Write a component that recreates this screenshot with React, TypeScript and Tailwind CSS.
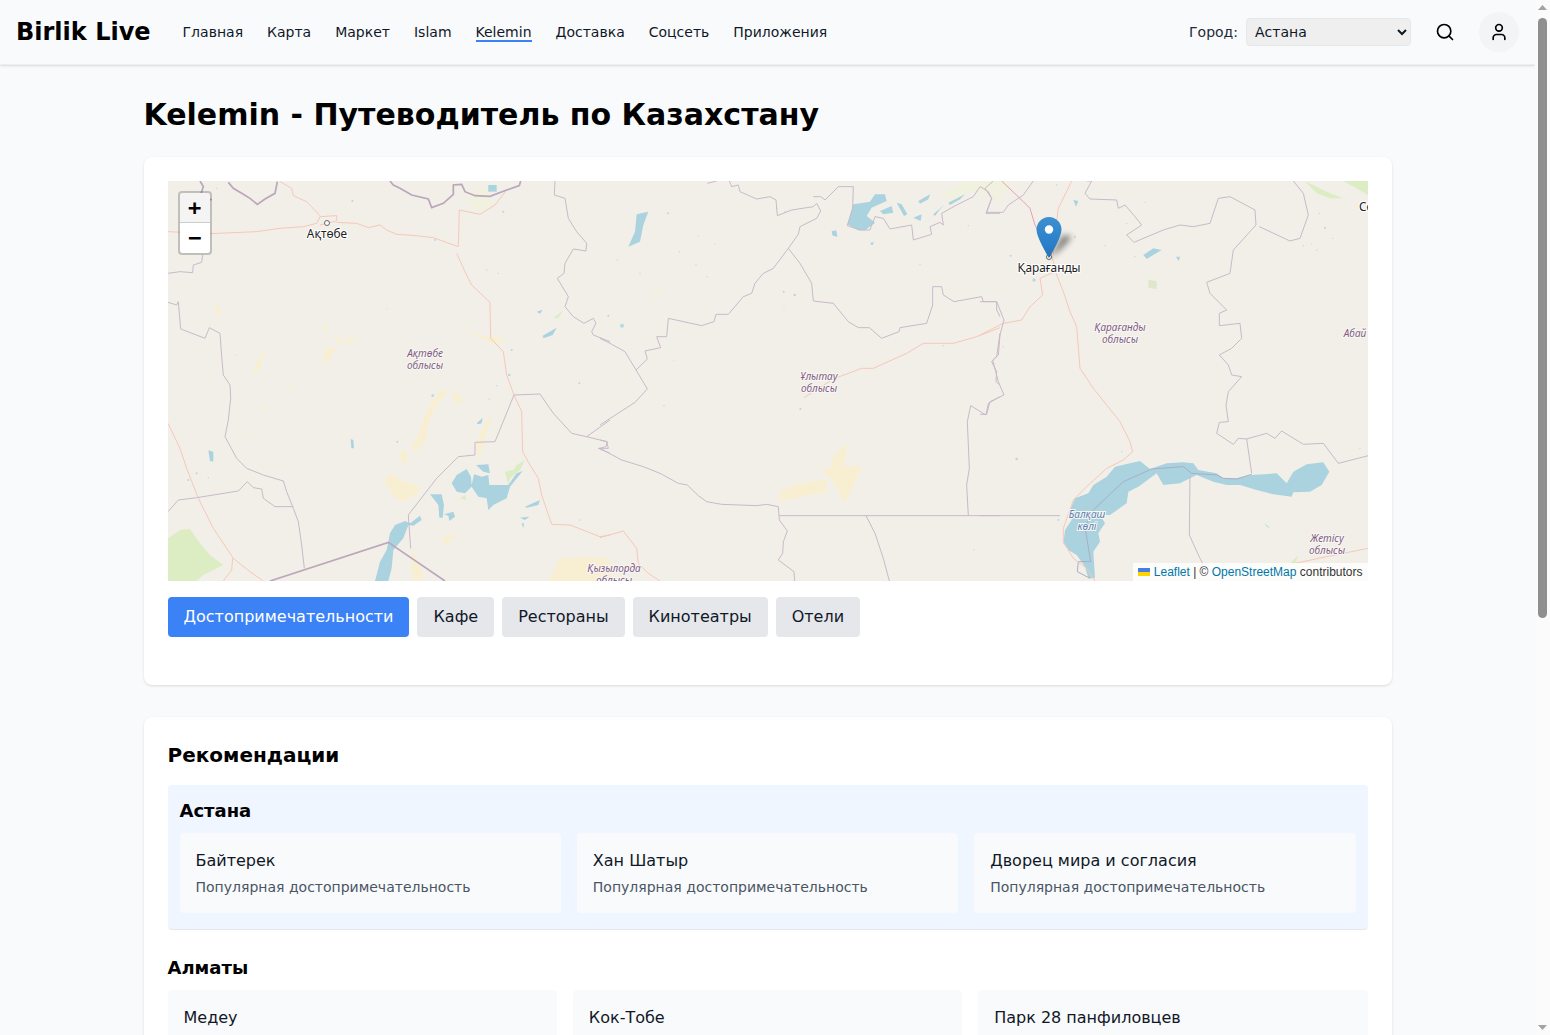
import { Search, User } from "lucide-react";

const BORDER = "#c9b9c9";
const ROAD = "#f6c8b8";
const WATER = "#aad3df";
const SAND = "#f8efd3";
const GREEN = "#dcedc4";
const PALE = "#f0f1de";

const z3 = {
  thick: [
    "M205,22 L220,40 245,55 270,70 292,88 315,72 345,55 352,20",
    "M120,18 L130,35 122,60 155,75",
    "M690,18 L700,30 720,40 755,60 805,72 815,98 850,85 880,58 880,30 905,28 915,50 945,62 990,64 1040,45 1078,32 1082,18",
    "M330,1218 L685,1102 855,1218",
  ],
  borders: [
    "M128,240 L125,262 100,270 98,293 60,290 24,295",
    "M1185,18 L1183,60 1215,70 1225,130 1250,170 1280,205 1278,228 1240,222 1215,265 1212,295 1192,310 1225,365 1215,395 1240,425 1272,445 1300,430 1308,445 1295,470 1300,480 1350,500",
    "M24,382 L50,390 55,380 62,462 135,490 148,458 180,475 185,545 190,600 210,630 212,670 205,735 195,785 230,850 260,880 310,900 370,918 380,950 400,1000 415,1040 425,1110 433,1180",
    "M24,1010 L55,975 110,968 235,948 262,920 280,938 305,942 310,970 345,995 400,995",
    "M1350,735 L1280,785 1235,775 1180,715 1140,657 1062,660 1005,800 945,802 945,840 895,845 830,910 745,1020 752,1120",
    "M1280,785 L1340,800 1345,820 1315,820 1350,835",
  ],
  roads: [
    "M24,170 L150,176 290,170 360,160 430,155 470,145 480,125 530,122 530,138 480,150",
    "M530,142 L590,145 625,158 660,150 680,165 710,178 770,182 820,188 895,215",
    "M360,20 L395,40 400,62 440,80 480,122",
    "M895,215 L898,105 960,118 1005,90 1040,45",
    "M890,235 L915,290 935,330 990,382 992,490 1030,530 1040,600 1062,660 1085,710 1088,830 1110,870 1135,910 1145,960 1175,1048 1230,1050 1320,1085 1350,1080",
    "M24,745 L60,820 80,880 115,970 160,1060 220,1150 270,1190 310,1218",
    "M218,1150 L215,1185 190,1218",
  ],
  water: [
    "M572,792 L580,795 582,820 574,820Z",
    "M950,745 L968,728 965,745 955,748Z",
    "M985,30 L1010,30 1010,50 985,50Z",
    "M145,826 L160,830 160,860 150,858Z",
    "M1130,410 L1148,404 1140,416Z",
    "M1148,482 L1190,458 1178,480 1150,490Z",
  ],
  sand: [
    "M770,790 L800,705 840,645 865,650 830,690 800,760 800,795 765,835 755,815Z",
    "M875,655 L890,652 910,675 890,690Z",
    "M950,800 L985,725 995,725 975,790 955,860Z",
    "M490,570 L495,520 530,515 505,560Z",
    "M525,475 L540,500 590,480 570,505 530,505Z",
    "M275,605 L300,540 315,530 300,580Z",
    "M905,460 L975,485 1040,490 1010,510 975,495Z",
    "M160,395 L185,395 175,430Z",
    "M1165,1218 L1200,1150 1280,1145 1350,1150 1350,1218Z",
    "M720,830 L735,822 745,860 725,865Z",
    "M385,630 L405,620 395,635Z",
    "M300,712 L330,688 318,708Z",
    "M248,782 L268,762 258,782Z",
    "M488,470 L503,432 498,470Z",
  ],
  green: [
    "M24,1090 L60,1065 90,1062 120,1105 150,1140 190,1170 130,1200 110,1218 24,1218Z",
    "M1180,430 L1210,405 1195,430Z",
  ],
  pale: ["M920,60 L985,35 1000,90 960,112 925,85Z"],
};

const z4 = {
  borders: [
    "M322,25 L350,18",
    "M388,18 L395,35 415,30 420,50 470,72 510,65 528,75 532,122 575,105 640,95 650,85 662,108 650,130 600,155 595,178 565,220 520,280 490,295 465,325 455,355 430,365 385,418 348,418 342,440 305,452 205,430 200,485 170,485 182,518 135,528 142,552 108,585 142,642 105,682 0,750",
    "M0,490 L30,505 75,530 108,585",
    "M565,220 L600,265 635,325 640,378 700,385 745,440 775,458 808,458 845,490 897,470 900,458 980,445 998,390 998,335 1025,335 1030,360 1062,380 1145,365 1150,380 1190,380 1190,405 1200,425",
    "M640,65 L662,65 675,75 715,35 760,35 758,100 742,152 780,165 810,165 825,125 850,130 870,162 935,150 940,195 995,178 990,155 1020,142 1030,150 1025,115 1070,90 1120,65 1140,35 1165,50 1175,70 1158,115 1200,115",
    "M0,795 L22,800 18,815 0,820 65,855 130,875 180,895 235,925 262,930 295,962 320,980 365,988 470,992 500,988 535,995 538,1035 562,1068 550,1100 548,1135 535,1155 582,1190 584,1218",
    "M538,1022 L1200,1022",
    "M798,1022 L825,1075 850,1150 868,1218",
    "M1105,1022 L1100,930 1108,880 1102,740 1112,692 1158,720 1165,685 1200,665",
    "M1200,475 L1190,545 1175,560 1190,590 1188,620 1200,630",
  ],
  roads: [
    "M612,668 L700,612 785,580 820,580 920,535 970,505 1060,505 1130,485 1200,458",
    "M0,1088 L70,1068 110,1120 115,1165 145,1195 180,1218",
  ],
  water: [
    "M110,118 L145,110 130,150 120,200 85,215 105,170Z",
    "M695,170 L708,165 712,185 698,182Z",
  ],
  sand: [
    "M530,990 L545,945 600,925 680,912 680,955 625,960 600,968 545,975Z",
    "M665,885 L695,875 700,840 745,805 730,872 785,875 760,935 735,985 700,920Z",
    "M135,370 L190,332 175,350Z",
  ],
};

const z5 = {
  strongRoads: ["M65,18 L130,80 150,100 165,150 185,190 215,240"],
  roads: [
    "M215,240 L230,300 250,350 270,410 290,455 300,580 340,640 420,740 450,800 458,830 430,855 380,880 320,935 280,975 250,1060 250,1100 280,1150 320,1180 345,1218",
    "M275,18 L235,100 225,175 220,240",
    "M0,480 L70,445 125,435 150,395 188,360 180,310 225,290",
    "M945,1165 L1040,1145 1164,1120",
  ],
  borders: [
    "M320,18 L335,18 315,55 330,72 410,75 415,100 435,90 465,125 485,150 440,180 462,202 550,165 600,150 640,155 690,145 715,70 750,65 825,105 828,150 760,225 750,295 680,322 690,355 720,385 740,405 718,415 718,452 780,445 785,490 755,520 718,540 745,570 755,600 785,605 745,650 738,690 745,740 718,742 710,775 760,808 775,790 800,792 860,775 885,790 905,768 970,808 1030,805 1075,865 1165,842",
    "M838,155 L930,198 960,190 985,120 970,55 940,18",
    "M800,792 L815,895",
    "M630,905 L628,1080 660,1150 670,1170",
    "M0,380 L50,380 72,435 60,480 55,540 38,555 55,620 72,660 30,680 20,718 0,718",
    "M40,18 L15,40 35,70 20,112 70,112 85,90 130,60 160,18",
    "M0,1022 L240,1022",
  ],
  water: [
    "M490,240 L520,220 545,225 520,240 500,252Z",
    "M588,245 L600,245 596,258Z",
    "M280,75 L295,78 288,95Z",
  ],
  green: [
    "M975,18 L1040,50 1090,70 1050,70 1010,55Z",
    "M1090,18 L1164,60 1164,18Z",
    "M930,1165 L955,1140 945,1170Z",
  ],
  softGreen: ["M505,315 L530,318 530,342 505,338Z"],
};

const balkhash = {
  water: [
    "M10,265 L15,225 35,195 30,165 45,130 85,115 100,90 140,65 165,35 210,25 240,18 270,42 320,25 370,22 400,25 415,45 470,55 490,70 530,70 575,60 650,55 680,85 700,50 740,28 790,22 808,50 785,90 750,110 700,112 695,125 640,118 590,105 540,90 500,90 460,80 410,60 390,70 360,85 310,90 290,55 270,70 235,95 205,110 200,145 150,180 120,180 135,205 115,235 120,260 100,290 105,370 85,370 75,335 50,300 25,285Z",
    "M612,205 L630,218 622,216Z",
  ],
  lakeBorders: [
    "M100,165 L190,80 275,42 370,35 395,55 470,60 490,70 530,72 575,58",
    "M100,165 L75,215 92,320 55,320 52,350 90,370",
  ],
};

const lakes = {
  green: ["M405,50 L430,45 440,30 465,15 450,45 420,70 415,90Z", "M270,130 L285,120 290,135Z"],
  sand: [
    "M42,75 L65,55 90,75 155,95 140,120 100,142 70,125Z",
    "M215,245 L262,238 240,260 220,265Z",
    "M125,280 L135,300 165,370 130,378 125,340Z",
  ],
  water: [
    "M245,85 L260,60 290,42 303,65 305,90 312,58 335,65 355,60 358,90 375,90 415,90 440,55 458,48 420,95 410,130 370,150 355,165 350,130 325,125 305,95 285,115 260,110Z",
    "M318,30 L355,28 360,55 340,50Z",
    "M180,118 L215,118 222,150 218,188 208,188 205,150Z",
    "M222,178 L250,170 255,185 238,198 235,182Z",
    "M15,378 L30,320 50,285 60,235 75,210 105,198 120,205 150,182 155,195 130,212 115,210 100,250 70,285 65,340 55,378Z",
    "M465,155 L510,135 505,150 470,158Z",
    "M450,188 L478,185 465,195Z",
    "M455,205 L462,205 460,220Z",
  ],
};

const topLakes = {
  pale: ["M340,30 L420,0 540,0 510,60 480,40 420,30 350,60Z"],
  water: [
    "M52,130 L70,70 120,62 135,40 165,40 170,60 125,80 110,105 135,125 105,148 85,148Z",
    "M5,150 L18,150 22,165 8,160Z",
    "M150,90 L185,75 190,95 160,100Z",
    "M200,65 L215,70 232,100 222,105Z",
    "M250,110 L275,100 272,120Z",
    "M265,60 L300,40 295,55 270,68Z",
    "M310,100 L345,70 330,85 315,105Z",
    "M355,65 L405,40 390,55 360,72Z",
    "M120,190 L132,182 128,192Z",
  ],
};

type LayerData = {
  thick?: string[];
  borders?: string[];
  roads?: string[];
  strongRoads?: string[];
  lakeBorders?: string[];
  water?: string[];
  sand?: string[];
  green?: string[];
  softGreen?: string[];
  pale?: string[];
};

function Layer({ data, x, y = -6, dots = [] }: { data: LayerData; x: number; y?: number; dots?: number[][] }) {
  return (
    <g transform={`translate(${x},${y}) scale(0.33333)`}>
      {data.pale?.map((d) => <path key={d} d={d} fill={PALE} />)}
      {data.green?.map((d) => <path key={d} d={d} fill={GREEN} />)}
      {data.softGreen?.map((d) => <path key={d} d={d} fill="#dfe6cb" />)}
      {data.sand?.map((d) => <path key={d} d={d} fill={SAND} />)}
      {data.water?.map((d) => <path key={d} d={d} fill={WATER} />)}
      {dots.map(([cx, cy, r]) => <circle key={`${cx}-${cy}`} cx={cx} cy={cy} r={r} fill={WATER} opacity={0.8} />)}
      {data.roads?.map((d) => <path key={d} d={d} fill="none" stroke={ROAD} strokeWidth={1} vectorEffect="non-scaling-stroke" />)}
      {data.strongRoads?.map((d) => <path key={d} d={d} fill="none" stroke="#eb9db0" strokeWidth={1} vectorEffect="non-scaling-stroke" />)}
      {data.borders?.map((d) => <path key={d} d={d} fill="none" stroke={BORDER} strokeWidth={1} vectorEffect="non-scaling-stroke" />)}
      {data.lakeBorders?.map((d) => <path key={d} d={d} fill="none" stroke="#a9aec4" strokeWidth={1} vectorEffect="non-scaling-stroke" />)}
      {data.thick?.map((d) => <path key={d} d={d} fill="none" stroke="#bba6bb" strokeWidth={1.7} vectorEffect="non-scaling-stroke" />)}
    </g>
  );
}

const dots3 = [
  [577, 78, 3], [825, 195, 3], [1030, 110, 3], [980, 285, 2], [1015, 295, 2], [1055, 525, 3],
  [1048, 600, 4], [1010, 632, 2], [988, 672, 2], [818, 662, 4], [712, 800, 3], [1258, 625, 3],
  [85, 915, 3], [110, 895, 3], [145, 908, 2], [1260, 1035, 2], [170, 40, 2], [227, 540, 1.5], [680, 402, 1.5],
];
const dots4 = [
  [204, 115, 3], [238, 230, 2], [52, 255, 2], [288, 270, 2], [120, 295, 2], [322, 305, 2], [66, 452, 6], [25, 422, 3],
  [551, 350, 3], [584, 360, 4], [552, 403, 1.5], [815, 205, 3], [1105, 152, 2], [960, 268, 2], [1030, 512, 2], [601, 702, 3],
  [1122, 1124, 2], [192, 692, 2], [222, 556, 1.5], [295, 184, 1.5], [345, 206, 1.5], [530, 100, 2], [555, 110, 2],
];
const dots5 = [
  [162, 315, 5], [92, 242, 3], [110, 852, 4], [425, 830, 2], [70, 515, 2], [235, 1035, 3],
  [1018, 115, 2], [1035, 158, 3], [1058, 190, 2], [1010, 225, 2], [970, 212, 2], [995, 208, 1.5], [1140, 820, 2],
  [495, 82, 2], [375, 212, 2], [440, 145, 2], [465, 245, 2], [230, 30, 2], [285, 185, 3],
];

function RegionLabel({ x, y, lines, color = "#7f5d85" }: { x: number; y: number; lines: string[]; color?: string }) {
  return (
    <text
      textAnchor="middle"
      fontFamily="'Noto Sans', sans-serif"
      fontStyle="italic"
      fontSize={10}
      fill={color}
      stroke="#f8f6f2"
      strokeWidth={2}
      paintOrder="stroke"
    >
      {lines.map((l, i) => (
        <tspan key={l} x={x} y={y + i * 12}>
          {l}
        </tspan>
      ))}
    </text>
  );
}

function CityLabel({ x, y, text, anchor = "middle" }: { x: number; y: number; text: string; anchor?: "middle" | "start" }) {
  return (
    <text
      x={x}
      y={y}
      textAnchor={anchor}
      fontFamily="'Noto Sans', sans-serif"
      fontSize={11.8}
      fill="#222"
      stroke="#ffffff"
      strokeWidth={2}
      paintOrder="stroke"
    >
      {text}
    </text>
  );
}

function MapDrawing() {
  return (
    <svg className="block h-full w-full" viewBox="0 0 1200 400">
      <rect width="1200" height="400" fill="#f2efe9" />
      <Layer data={topLakes} x={662} y={0} />
      <Layer data={lakes} x={202} y={274} />
      <Layer data={balkhash} x={892} y={274} />
      <Layer data={z3} x={-8} dots={dots3} />
      <Layer data={z4} x={432} dots={dots4} />
      <Layer data={z5} x={812} dots={dots5} />
      <circle cx={159} cy={42} r={2.5} fill="#fff" stroke="#666" strokeWidth={1} />
      <CityLabel x={159} y={57} text="Ақтөбе" />
      <circle cx={881} cy={76} r={2.5} fill="#fff" stroke="#666" strokeWidth={1} />
      <CityLabel x={881} y={91} text="Қарағанды" />
      <CityLabel x={1191} y={30} text="Се" anchor="start" />
      <RegionLabel x={257} y={176} lines={["Ақтөбе", "облысы"]} />
      <RegionLabel x={651} y={199} lines={["Ұлытау", "облысы"]} />
      <RegionLabel x={952} y={150} lines={["Қарағанды", "облысы"]} />
      <RegionLabel x={1187} y={156} lines={["Абай"]} />
      <RegionLabel x={446} y={391} lines={["Қызылорда", "облысы"]} />
      <RegionLabel x={1159} y={361} lines={["Жетісу", "облысы"]} />
      <RegionLabel x={919} y={337} lines={["Балқаш", "көлі"]} color="#5b82b5" />
    </svg>
  );
}

function Marker() {
  return (
    <svg className="absolute left-[865px] top-[30px]" width="60" height="56" viewBox="0 0 60 56" aria-hidden="true">
      <defs>
        <linearGradient id="pin" x1="0" y1="0" x2="0" y2="1">
          <stop offset="0" stopColor="#3f90cf" />
          <stop offset="0.6" stopColor="#2a81cb" />
          <stop offset="1" stopColor="#2673b5" />
        </linearGradient>
        <filter id="shadowBlur" x="-50%" y="-50%" width="200%" height="200%">
          <feGaussianBlur stdDeviation="3" />
        </filter>
      </defs>
      <path d="M16 47 L30 24 L39 26 L28 38Z" fill="#000" opacity="0.5" filter="url(#shadowBlur)" />
      <path
        transform="translate(3.5,6)"
        d="M12.5 0C5.6 0 0 5.6 0 12.5C0 21 12.5 41 12.5 41C12.5 41 25 21 25 12.5C25 5.6 19.4 0 12.5 0Z"
        fill="url(#pin)"
      />
      <circle cx="16" cy="18.5" r="4.2" fill="#fff" />
    </svg>
  );
}

function Scrollbar() {
  return (
    <div className="fixed bottom-0 right-0 top-0 flex w-[15px] flex-col items-center bg-[#fbfbfb]">
      <svg className="mt-[5px] shrink-0" width="9" height="5" viewBox="0 0 9 5" aria-hidden="true">
        <path d="M4.5 0L9 5H0Z" fill="#a3a3a3" />
      </svg>
      <div className="mt-2 h-[600px] w-[9px] shrink-0 rounded-[5px] bg-[#8f8f8f]" />
      <svg className="mb-[5px] mt-auto shrink-0" width="9" height="5" viewBox="0 0 9 5" aria-hidden="true">
        <path d="M4.5 5L9 0H0Z" fill="#a3a3a3" />
      </svg>
    </div>
  );
}

const navItems = ["Главная", "Карта", "Маркет", "Islam", "Kelemin", "Доставка", "Соцсеть", "Приложения"];
const filters = ["Достопримечательности", "Кафе", "Рестораны", "Кинотеатры", "Отели"];
const desc = "Популярная достопримечательность";

function Place({ name }: { name: string }) {
  return (
    <div className="rounded bg-gray-50 p-4">
      <div className="mb-1 text-base text-gray-900">{name}</div>
      <div className="text-sm text-gray-600">{desc}</div>
    </div>
  );
}

function City({ name, places, active }: { name: string; places: string[]; active?: boolean }) {
  return (
    <section className={active ? "rounded border-b border-gray-200 bg-blue-50 p-3 pb-4" : "border-b border-gray-200 pb-4"}>
      <h3 className="mb-2 text-lg font-bold text-black">{name}</h3>
      <div className="grid grid-cols-3 gap-4">
        {places.map((p) => (
          <Place key={p} name={p} />
        ))}
      </div>
    </section>
  );
}

export default function App() {
  return (
    <div className="min-h-[1727px] bg-gray-50 font-['DejaVu_Sans',sans-serif] text-black">
      <div className="mr-[15px]">
        <header className="flex h-[65px] items-center border-b border-[#eceef1] bg-gray-50 px-4 shadow-sm">
          <div className="mr-8 text-2xl font-bold">Birlik Live</div>
          <nav className="flex items-center gap-6 text-sm text-gray-900">
            {navItems.map((n) => (
              <a
                key={n}
                className={
                  n === "Kelemin"
                    ? "translate-y-px border-b-2 border-[#3b82f6] leading-4"
                    : "translate-y-px border-b-2 border-transparent leading-4"
                }
              >
                {n}
              </a>
            ))}
          </nav>
          <div className="ml-auto flex items-center">
            <span className="mr-2 text-sm text-gray-800">Город:</span>
            <select className="h-7 w-[165px] rounded border border-gray-200 bg-[#efefef] px-1 text-sm text-gray-900">
              <option>Астана</option>
            </select>
            <button className="mx-6 text-black">
              <Search size={20} />
            </button>
            <button className="flex h-10 w-10 items-center justify-center rounded-full bg-gray-100 text-black">
              <User size={20} />
            </button>
          </div>
        </header>

        <main className="mx-auto max-w-7xl px-4 py-8">
          <h1 className="mb-6 text-3xl font-bold">Kelemin - Путеводитель по Казахстану</h1>

          <div className="mb-8 rounded-lg bg-white p-6 shadow">
            <div className="relative h-[400px] overflow-hidden">
              <MapDrawing />
              <Marker />
              <div className="absolute left-2.5 top-2.5 w-[34px] rounded border-2 border-black/20 bg-clip-padding">
                <div className="flex h-[30px] items-center justify-center rounded-t-sm border-b border-[#ccc] bg-[#f4f4f4] font-['DejaVu_Sans_Mono',monospace] text-[22px] font-bold leading-none">
                  +
                </div>
                <div className="flex h-[30px] items-center justify-center rounded-b-sm bg-white font-['DejaVu_Sans_Mono',monospace] text-[22px] font-bold leading-none">
                  −
                </div>
              </div>
              <div className="absolute bottom-0 right-0 flex h-[18px] items-center bg-white/80 px-[5px] font-['Liberation_Sans',sans-serif] text-xs text-[#333]">
                <svg className="mr-1 inline-block" width="12" height="8" viewBox="0 0 12 8" aria-hidden="true">
                  <rect width="12" height="4" fill="#4C7BE1" />
                  <rect y="4" width="12" height="4" fill="#FFD500" />
                </svg>
                <span className="text-[#0078A8]">Leaflet</span>
                <span className="mx-[3.3px]">|</span>
                <span>©&nbsp;</span>
                <span className="text-[#0078A8]">OpenStreetMap</span>
                <span>&nbsp;contributors</span>
              </div>
            </div>
            <div className="mb-6 mt-4 flex gap-2">
              {filters.map((f, i) => (
                <button
                  key={f}
                  className={
                    i === 0
                      ? "rounded bg-[#3b82f6] px-4 py-2 text-base text-white"
                      : "rounded bg-gray-200 px-4 py-2 text-base text-gray-900"
                  }
                >
                  {f}
                </button>
              ))}
            </div>
          </div>

          <div className="rounded-lg bg-white p-6 shadow">
            <h2 className="mb-4 text-xl font-bold">Рекомендации</h2>
            <div className="flex flex-col gap-6">
              <City name="Астана" active places={["Байтерек", "Хан Шатыр", "Дворец мира и согласия"]} />
              <City name="Алматы" places={["Медеу", "Кок-Тобе", "Парк 28 панфиловцев"]} />
            </div>
          </div>
        </main>
      </div>
      <Scrollbar />
    </div>
  );
}
